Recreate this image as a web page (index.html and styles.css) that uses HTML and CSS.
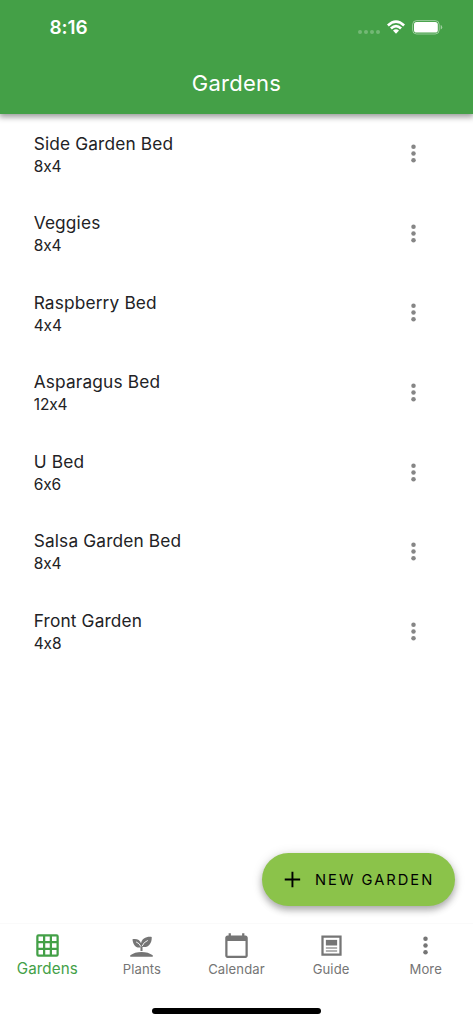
FILE: index.html
```html
<!DOCTYPE html>
<html lang="en">
<head>
<meta charset="utf-8">
<meta name="viewport" content="width=device-width, initial-scale=1">
<title>Gardens</title>
<link rel="stylesheet" href="styles.css">
</head>
<body>
<svg width="0" height="0" class="defs" aria-hidden="true">
  <symbol id="dots" viewBox="0 0 24 24"><circle cx="12" cy="6" r="2"/><circle cx="12" cy="12" r="2"/><circle cx="12" cy="18" r="2"/></symbol>
</svg>
<div class="app">
  <header class="header">
    <div class="status">
      <span class="time">8:16</span>
      <span class="indicators">
        <svg class="signal" width="22" height="4" viewBox="0 0 22 4"><circle cx="2" cy="2" r="2"/><circle cx="8" cy="2" r="2"/><circle cx="14" cy="2" r="2"/><circle cx="20" cy="2" r="2"/></svg>
        <svg class="wifi" width="18" height="14" viewBox="0 0 18 14"><path d="M0 4.5Q9-4.100 18 4.500L16.200 6.400Q9-.3 1.800 6.400Z"/><path d="M3 7.500Q9 1.900 15 7.500L13.100 9.400Q9 5.800 4.900 9.400Z"/><path d="M6 10.500Q9 8 12 10.500L9.500 13.200Q9 13.700 8.500 13.200Z"/></svg>
        <svg class="battery" width="31" height="15" viewBox="0 0 31 15"><rect class="shell" x=".6" y=".6" width="26.600" height="13.400" rx="4"/><rect x="2" y="2" width="23.800" height="10.600" rx="2.600"/><path class="tip" d="M28.700 5v4.600q1.500-.6 1.500-2.300T28.700 5Z"/></svg>
      </span>
    </div>
    <h1 class="heading">Gardens</h1>
  </header>
  <main class="list">
    <div class="row"><div><div class="name">Side Garden Bed</div><div class="size">8x4</div></div><svg class="more"><use href="#dots"/></svg></div>
    <div class="row"><div><div class="name">Veggies</div><div class="size">8x4</div></div><svg class="more"><use href="#dots"/></svg></div>
    <div class="row"><div><div class="name">Raspberry Bed</div><div class="size">4x4</div></div><svg class="more"><use href="#dots"/></svg></div>
    <div class="row"><div><div class="name">Asparagus Bed</div><div class="size">12x4</div></div><svg class="more"><use href="#dots"/></svg></div>
    <div class="row"><div><div class="name">U Bed</div><div class="size">6x6</div></div><svg class="more"><use href="#dots"/></svg></div>
    <div class="row"><div><div class="name">Salsa Garden Bed</div><div class="size">8x4</div></div><svg class="more"><use href="#dots"/></svg></div>
    <div class="row"><div><div class="name">Front Garden</div><div class="size">4x8</div></div><svg class="more"><use href="#dots"/></svg></div>
  </main>
  <button class="fab"><svg width="27" height="27" viewBox="0 0 24 24"><path d="M18.800 12.800h-6v6h-1.700v-6h-6v-1.700h6v-6h1.700v6h6z"/></svg><span>NEW GARDEN</span></button>
  <nav class="tabs">
    <div class="tab active"><svg viewBox="0 0 24 24"><path fill-rule="evenodd" d="M4 2h16a2 2 0 0 1 2 2v16a2 2 0 0 1-2 2H4a2 2 0 0 1-2-2V4a2 2 0 0 1 2-2ZM4 4v4h4V4Zm6 0v4h4V4Zm6 0v4h4V4ZM4 10v4h4v-4Zm6 0v4h4v-4Zm6 0v4h4v-4ZM4 16v4h4v-4Zm6 0v4h4v-4Zm6 0v4h4v-4Z"/></svg><span>Gardens</span></div>
    <div class="tab"><svg viewBox="0 0 24 24"><path d="M2 22v-1.300C4.500 18.700 8 17.700 12 17.700s7.500 1 10 3V22ZM11.100 16.900v-3.300C7.200 14.600 4.300 11.300 4 6.400c3.700-.7 6.700.5 7.600 3.600.7-4.100 4.400-6.100 9.500-5.600.2 5.900-2.900 9.700-8.200 8.900v3.600Z"/><path class="vein" d="M7.200 8.800Q10.300 10 11.500 13M17.600 7.500Q13.900 8.900 12.500 12.600"/></svg><span>Plants</span></div>
    <div class="tab"><svg viewBox="0 0 24 24"><path d="M20 3h-1V1h-2v2H7V1H5v2H4c-1.100 0-2 .9-2 2v16c0 1.100.9 2 2 2h16c1.100 0 2-.9 2-2V5c0-1.100-.9-2-2-2zm0 18H4V8h16v13z"/></svg><span>Calendar</span></div>
    <div class="tab"><svg viewBox="0 0 24 24"><path fill-rule="evenodd" d="M3 3h18v18H3ZM5 5v14h14V5Z"/><path d="M7 7h10v5H7Z"/><path class="faint" d="M7 13.500h10v1.300H7ZM7 16.200h10v1.300H7Z"/></svg><span>Guide</span></div>
    <div class="tab"><svg><use href="#dots"/></svg><span>More</span></div>
  </nav>
  <div class="home-indicator"></div>
</div>
</body>
</html>
```
FILE: styles.css
```css
* { box-sizing: border-box; }
body { margin: 0; background: #fff; font-family: Inter, "Liberation Sans", sans-serif; font-feature-settings: "calt" 0; color: #222225; }
.defs { position: absolute; }
.app { height: 1024px; width: 473px; display: flex; flex-direction: column; overflow: hidden; }
.header { flex: none; height: 114px; background: #44a047; color: #fff; box-shadow: 0 2px 6px 1px rgba(0,0,0,.4); }
.status { height: 54px; padding: 0 30px 0 49.500px; display: flex; justify-content: space-between; align-items: center; }
.time { font-size: 19px; font-weight: 600; letter-spacing: -.1px; }
.indicators { display: flex; align-items: center; fill: #fff; }
.signal { opacity: .25; margin: 10px 7px 0 0; }
.wifi { margin-right: 7px; }
.shell { fill: none; stroke: #fff; stroke-opacity: .45; stroke-width: 1; }
.tip { fill-opacity: .5; }
.heading { margin: 0; height: 58px; line-height: 58px; text-align: center; font-size: 22px; font-weight: 400; letter-spacing: .25px; }
.list { flex: none; padding-top: 1px; }
.row { height: 79.570px; padding: 16.500px 46.500px 0 33.700px; display: flex; justify-content: space-between; }
.name { font-size: 17.300px; line-height: 23px; letter-spacing: .15px; }
.size { font-size: 15.500px; line-height: 23px; letter-spacing: -.1px; }
.more { width: 27px; height: 27px; margin-top: 8.800px; fill: #868686; }
.fab { align-self: flex-end; flex: none; width: 193px; height: 53px; margin: 181.500px 18px 0 0; padding: 0 0 0 17px; border: 0; border-radius: 27px; background: #8bc34a; color: #000; display: flex; align-items: center; gap: 9px; font: 400 14.700px Inter, sans-serif; letter-spacing: 2px; white-space: nowrap; box-shadow: 0 4px 7px rgba(0,0,0,.28), 0 1px 12px rgba(0,0,0,.12); }
.tabs { flex: none; height: 84px; margin-top: 16.500px; display: flex; border-top: 1px solid #fafafa; color: #757575; }
.tab { flex: 1; padding-top: 8.500px; display: flex; flex-direction: column; align-items: center; font-size: 13.100px; line-height: 18px; letter-spacing: .1px; }
.tab svg { width: 27px; height: 27px; fill: currentColor; margin-bottom: .5px; }
.tab.active { color: #43a047; font-size: 15.200px; letter-spacing: .1px; }
.vein { fill: none; stroke: #fff; stroke-width: .8; }
.faint { opacity: .75; }
.home-indicator { flex: none; width: 169px; height: 6px; margin: 1px auto 0; border-radius: 3px; background: #000; }
```
